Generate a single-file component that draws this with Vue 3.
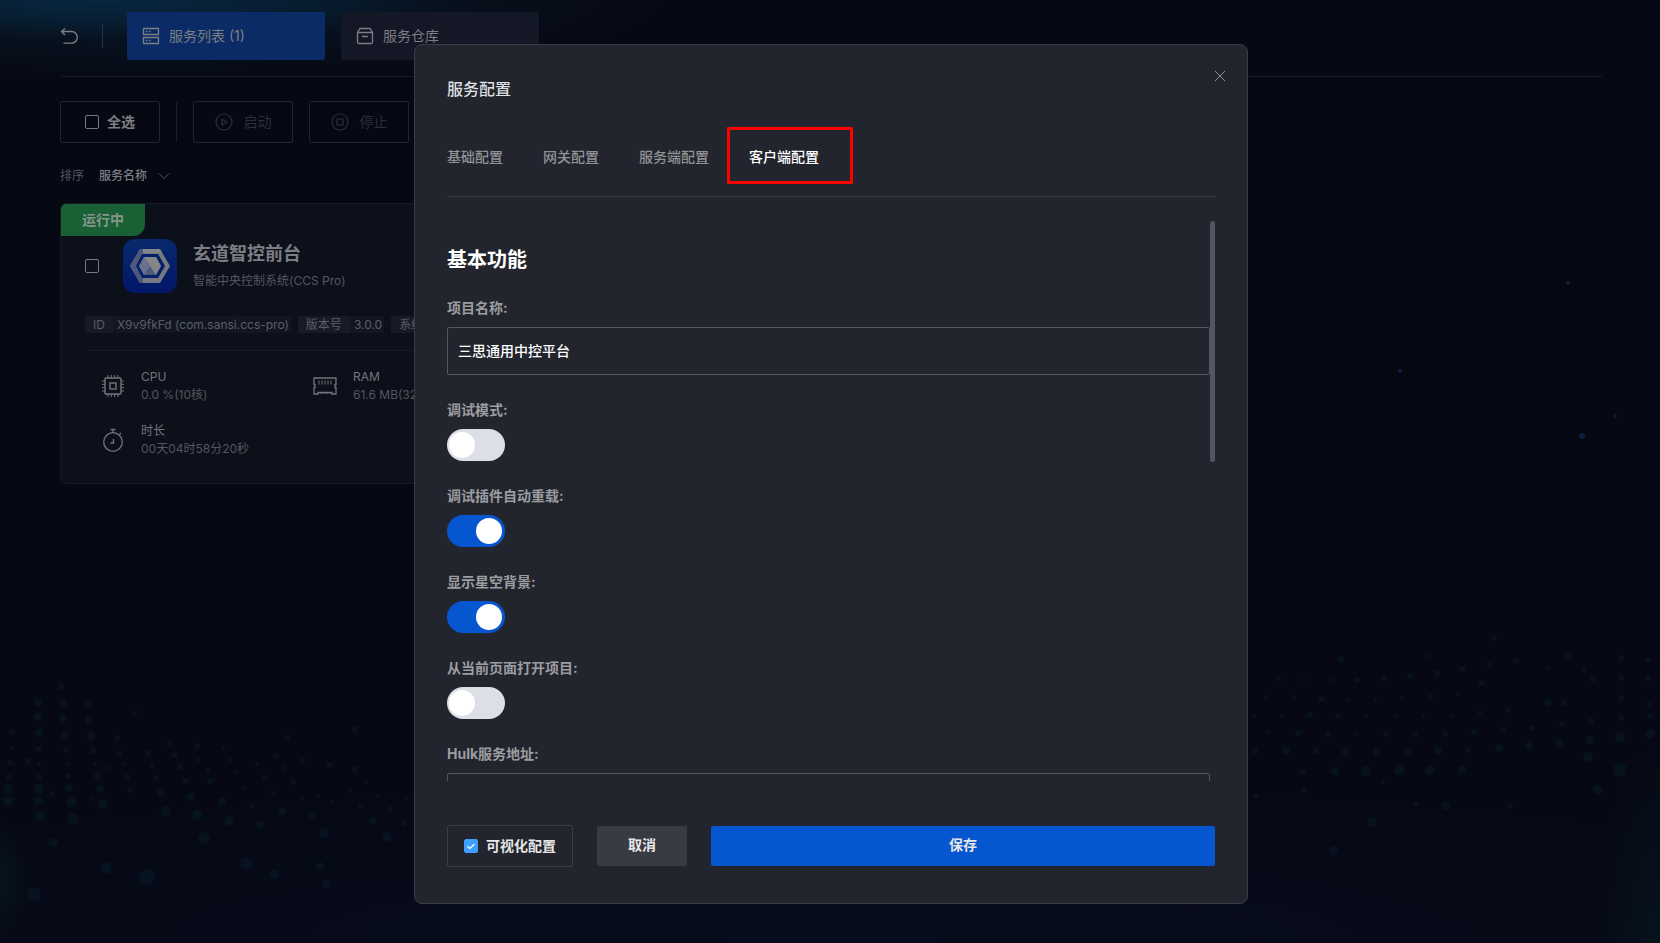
<script setup>
import { ref } from "vue";

const navTabs = ["服务列表 (1)", "服务仓库"];
const configTabs = ["基础配置", "网关配置", "服务端配置", "客户端配置"];
const activeTab = ref("客户端配置");

const projectName = ref("三思通用中控平台");
const hulkUrl = ref("");
const visual = ref(true);

const switches = ref([
  { id: "debug", label: "调试模式:", on: false },
  { id: "reload", label: "调试插件自动重载:", on: true },
  { id: "stars", label: "显示星空背景:", on: true },
  { id: "open", label: "从当前页面打开项目:", on: false },
]);

const tags = [
  { name: "ID", value: "X9v9fkFd (com.sansi.ccs-pro)" },
  { name: "版本号", value: "3.0.0" },
  { name: "系统", value: "darwin" },
];

const stats = [
  { icon: "cpu", name: "CPU", value: "0.0 %(10核)" },
  { icon: "ram", name: "RAM", value: "61.6 MB(32.0 GB)" },
  { icon: "time", name: "时长", value: "00天04时58分20秒" },
];

// 背景光点: [x, y, r]
const dots = [
  [12, 732, 3], [12, 748, 2], [10, 763, 3], [9, 777, 3], [8, 789, 5], [8, 801, 5],
  [38, 703, 4], [38, 717, 4], [39, 733, 4], [39, 749, 3], [39, 764, 2], [39, 777, 3], [39, 789, 5], [39, 801, 5], [40, 816, 6],
  [61, 687, 3], [63, 703, 4], [63, 718, 4], [65, 735, 4], [66, 750, 3], [67, 764, 2], [68, 776, 3], [69, 788, 4], [71, 802, 5], [73, 819, 6],
  [28, 761, 3], [52, 794, 3], [88, 704, 3], [89, 720, 4], [91, 736, 4], [93, 751, 3], [95, 764, 2], [98, 776, 4], [100, 789, 4], [103, 804, 5],
  [117, 738, 3], [119, 754, 3], [123, 764, 2], [127, 777, 3], [130, 790, 3], [135, 713, 2], [107, 768, 2], [93, 799, 2],
  [148, 753, 3], [152, 765, 3], [156, 778, 3], [161, 793, 4], [166, 811, 5], [170, 743, 3], [175, 755, 3], [180, 767, 3], [185, 781, 3], [191, 797, 4], [197, 815, 5],
  [197, 746, 3], [198, 760, 2], [208, 770, 2], [210, 781, 3], [222, 801, 4], [229, 821, 5], [204, 838, 6], [223, 749, 2], [230, 760, 2], [236, 773, 2], [244, 789, 2], [252, 806, 3], [260, 825, 4],
  [257, 764, 2], [265, 778, 3], [273, 793, 2], [282, 811, 4], [287, 738, 3], [276, 756, 3], [284, 768, 2], [293, 782, 3], [302, 798, 2], [312, 815, 4], [324, 833, 5],
  [302, 761, 3], [329, 765, 3], [355, 769, 3], [318, 795, 2], [332, 802, 2], [350, 791, 2], [361, 806, 3], [373, 821, 4], [387, 837, 5], [355, 729, 3], [366, 782, 2], [378, 795, 2], [390, 809, 3], [404, 823, 3], [406, 798, 2],
  [53, 842, 5], [106, 868, 6], [147, 877, 8], [34, 894, 7], [246, 863, 6], [274, 874, 4], [320, 866, 4], [326, 884, 4],
  [1255, 751, 3], [1279, 679, 2], [1304, 680, 2], [1331, 680, 2], [1357, 680, 3], [1384, 678, 3], [1410, 676, 3], [1437, 673, 3], [1463, 669, 3], [1490, 665, 3], [1516, 661, 3],
  [1266, 697, 2], [1294, 697, 2], [1321, 699, 3], [1348, 699, 2], [1375, 699, 2], [1402, 698, 2], [1430, 697, 3], [1458, 694, 2], [1481, 683, 3],
  [1254, 715, 2], [1282, 715, 2], [1310, 715, 3], [1338, 716, 3], [1366, 717, 2], [1395, 717, 2], [1423, 717, 2], [1451, 715, 2], [1480, 713, 2], [1508, 710, 3],
  [1269, 732, 2], [1298, 733, 3], [1328, 734, 3], [1357, 734, 2], [1386, 734, 3], [1415, 734, 3], [1445, 734, 3], [1474, 732, 3], [1503, 730, 3], [1532, 728, 3], [1562, 724, 3],
  [1286, 751, 4], [1316, 751, 3], [1346, 752, 4], [1377, 752, 4], [1408, 752, 3], [1438, 751, 4], [1468, 750, 3], [1499, 748, 4], [1529, 746, 4], [1559, 743, 4], [1590, 740, 4],
  [1303, 772, 3], [1335, 771, 4], [1366, 771, 5], [1399, 770, 5], [1430, 770, 5], [1462, 769, 4], [1304, 790, 3], [1383, 782, 2], [1256, 796, 3],
  [1341, 659, 3], [1429, 656, 2], [1494, 638, 3], [1568, 656, 4], [1549, 669, 2], [1584, 670, 2], [1548, 703, 4], [1564, 703, 3], [1621, 658, 3], [1621, 678, 3], [1621, 698, 3], [1621, 718, 3], [1620, 737, 5],
  [1648, 660, 3], [1648, 678, 3], [1650, 705, 3], [1650, 716, 3], [1650, 734, 5], [1620, 770, 7], [1588, 757, 5], [1593, 679, 3], [1591, 721, 3],
  [1446, 806, 4], [1510, 806, 3], [1416, 804, 3], [1598, 790, 5], [1334, 850, 4], [1372, 822, 5],
];

const stars = [[1582, 436, 3], [1615, 416, 2], [1400, 371, 2], [1568, 283, 2]];
</script>

<template>
  <div class="page">
    <svg class="dots" viewBox="0 0 1660 943" preserveAspectRatio="none" aria-hidden="true">
      <circle v-for="(d, i) in dots" :key="i" :cx="d[0]" :cy="d[1]" :r="d[2]" />
      <circle v-for="s in stars" :key="s[0]" class="star" :cx="s[0]" :cy="s[1]" :r="s[2]" />
    </svg>

    <header class="topbar">
      <button class="back" aria-label="返回">
        <svg width="20" height="18" viewBox="0 0 20 18" fill="none" stroke="currentColor" stroke-width="1.4">
          <path d="M5 1.5 1.5 4.5 5 8M1.5 4.5H11.5a5.8 5.8 0 0 1 0 11.6H3.5" />
        </svg>
      </button>
      <span class="sep"></span>
      <button v-for="(t, i) in navTabs" :key="t" class="nav-tab" :class="{ active: i === 0 }">
        <svg v-if="i === 0" width="18" height="18" viewBox="0 0 18 18" fill="none" stroke="currentColor" stroke-width="1.3">
          <path d="M1.5 1.5h15v6h-15zM1.5 10.5h15v6h-15z" />
          <path d="M4 4.5h1.5M7 4.5h1.5M4 13.5h1.5M7 13.5h1.5" />
        </svg>
        <svg v-else width="18" height="18" viewBox="0 0 18 18" fill="none" stroke="currentColor" stroke-width="1.3">
          <path d="M1.5 5.5 4 1.5h10l2.5 4v9.5a1.5 1.5 0 0 1-1.5 1.5H3A1.5 1.5 0 0 1 1.5 15zM1.5 5.5h15M6 9.5h6" />
        </svg>
        {{ t }}
      </button>
    </header>

    <div class="toolbar">
      <label class="tool all"><input type="checkbox" class="box" />全选</label>
      <span class="sep tall"></span>
      <button class="tool" disabled>
        <svg width="18" height="18" viewBox="0 0 18 18" fill="none" stroke="currentColor" stroke-width="1.2">
          <circle cx="9" cy="9" r="8" /><path d="M7 6.2v5.600L12 9z" />
        </svg>
        启动
      </button>
      <button class="tool" disabled>
        <svg width="18" height="18" viewBox="0 0 18 18" fill="none" stroke="currentColor" stroke-width="1.2">
          <circle cx="9" cy="9" r="8" /><path d="M6 6h6v6H6z" />
        </svg>
        停止
      </button>
    </div>

    <div class="sort">
      <label for="sort">排序</label>
      <select id="sort"><option>服务名称</option></select>
      <svg width="12" height="8" viewBox="0 0 12 8" fill="none" stroke="currentColor"><path d="M1 1.5 6 6.5 11 1.5" /></svg>
    </div>

    <article class="card">
      <span class="status">运行中</span>
      <div class="card-head">
        <input type="checkbox" class="box" aria-label="选择服务" />
        <svg class="logo" width="54" height="54" viewBox="0 0 54 54">
          <defs>
            <linearGradient id="lg" x1="0" y1="0" x2="0" y2="1">
              <stop offset="0" stop-color="#08296c" />
              <stop offset="1" stop-color="#03176a" />
            </linearGradient>
          </defs>
          <rect width="54" height="54" rx="12" fill="url(#lg)" />
          <path d="M17 10H37L47 27 37 44H17L7 27z" fill="#777982" />
          <path d="M17 10H20V16L14 27 20 38V44H17L7 27z" fill="#50597c" />
          <path d="M20 10H37L39 14H20z" fill="#85868a" />
          <path d="M19 15H35L42 27 35 39H19L13 27z" fill="#04206b" />
          <path d="M21 18H33L38 27 33 36H21L16 27z" fill="#50597c" />
          <path d="M21 18H33L38 27 33 36 27 27z" fill="#85868a" />
          <path d="M21 18 27 27 21 36 16 27z" fill="#69718c" />
        </svg>
        <div>
          <h2>玄道智控前台</h2>
          <p>智能中央控制系统(CCS Pro)</p>
        </div>
      </div>
      <div class="tags">
        <span v-for="t in tags" :key="t.name" class="tag"><b>{{ t.name }}</b><span>{{ t.value }}</span></span>
      </div>
      <div class="stats">
        <div v-for="s in stats" :key="s.name" class="stat">
          <svg v-if="s.icon === 'cpu'" width="24" height="24" viewBox="0 0 24 24" fill="none" stroke="currentColor" stroke-width="1.4">
            <rect x="4" y="4" width="16" height="16" rx="1" /><rect x="9" y="9" width="6" height="6" />
            <path d="M7 4V1M10.3 4V1M13.6 4V1M17 4V1M7 23v-3M10.3 23v-3M13.6 23v-3M17 23v-3M4 7H1M4 10.3H1M4 13.6H1M4 17H1M23 7h-3M23 10.3h-3M23 13.6h-3M23 17h-3" stroke-width="1" />
          </svg>
          <svg v-else-if="s.icon === 'ram'" width="24" height="24" viewBox="0 0 24 24" fill="none" stroke="currentColor" stroke-width="1.3">
            <path d="M1 4h22v6.5h-1v3h1V20h-4v-1.5H5V20H1v-6.5h1v-3H1z" />
            <path d="M6 6.5v4M9 6.5v4M12 6.5v4M15 6.5v4M18 6.5v4M8 18v2M11 18v2M14 18v2M17 18v2" stroke-width="1" />
          </svg>
          <svg v-else width="24" height="24" viewBox="0 0 24 24" fill="none" stroke="currentColor" stroke-width="1.3">
            <circle cx="12" cy="14" r="9.3" /><path d="M9.5 1.5h5M12 1.5v3M18.5 6.5 20 5M12.5 11v4h-3" />
          </svg>
          <div>
            <div class="stat-name">{{ s.name }}</div>
            <div class="stat-value">{{ s.value }}</div>
          </div>
        </div>
      </div>
    </article>

    <div class="overlay">
      <section class="dialog" role="dialog" aria-labelledby="dialog-title">
        <button class="close" aria-label="关闭">
          <svg width="12" height="12" viewBox="0 0 12 12" stroke="currentColor"><path d="M1 1 11 11M11 1 1 11" /></svg>
        </button>
        <h1 id="dialog-title">服务配置</h1>
        <nav class="tabs">
          <button
            v-for="t in configTabs"
            :key="t"
            class="tab"
            :class="{ active: activeTab === t }"
            @click="activeTab = t"
          >
            {{ t }}<span v-if="activeTab === t" class="mark"></span>
          </button>
        </nav>

        <div class="body">
          <form class="scroll" @submit.prevent>
            <h3>基本功能</h3>
            <div class="field">
              <label for="name">项目名称:</label>
              <input id="name" v-model="projectName" class="text" type="text" />
            </div>
            <div v-for="s in switches" :key="s.id" class="field">
              <label :for="s.id">{{ s.label }}</label>
              <input :id="s.id" v-model="s.on" class="switch" type="checkbox" role="switch" />
            </div>
            <div class="field">
              <label for="hulk">Hulk服务地址:</label>
              <input id="hulk" v-model="hulkUrl" class="text" type="text" />
            </div>
          </form>
          <span class="thumb"></span>
        </div>

        <footer class="actions">
          <label class="visual"><input v-model="visual" type="checkbox" class="box" />可视化配置</label>
          <button class="cancel">取消</button>
          <button class="save">保存</button>
        </footer>
      </section>
    </div>
  </div>
</template>

<style>
body {
  background: #060913;
}
</style>

<style scoped>
* {
  box-sizing: border-box;
}
h1, h2, h3, p {
  margin: 0;
}
button, input, select {
  font: inherit;
  color: inherit;
}
button {
  padding: 0;
  border: 0;
  background: none;
  cursor: pointer;
}
svg {
  flex: none;
}
.page {
  position: relative;
  min-height: 100vh;
  padding: 12px 58px 0 60px;
  overflow: hidden;
  font-family: Inter, "Noto Sans CJK SC", sans-serif;
  font-size: 14px;
  line-height: 20px;
  color: #7d7e83;
  background:
    radial-gradient(ellipse 360px 40px at 100px 0, #072640, transparent),
    radial-gradient(ellipse 520px 80px at 140px 0, #081a2b, transparent),
    radial-gradient(ellipse 30px 60px at 0 880px, #06151b, transparent),
    radial-gradient(ellipse 60px 200px at 100% 100%, #06131c, transparent),
    radial-gradient(ellipse 70% 160px at 50% 100%, #070c1e, transparent),
    #060913;
}
.dots {
  position: absolute;
  inset: 0;
  width: 100%;
  height: 100%;
  fill: #0d3040;
  fill-opacity: 0.26;
}
.dots .star {
  fill: #10386a;
  fill-opacity: 0.5;
}
.topbar {
  position: relative;
  display: flex;
  align-items: center;
  height: 65px;
  padding-bottom: 16px;
  border-bottom: 1px solid #151a26;
}
.back {
  width: 20px;
  height: 18px;
}
.sep {
  width: 1px;
  height: 24px;
  margin: 0 24px 0 22px;
  background: #2a3240;
}
.nav-tab {
  display: flex;
  align-items: center;
  gap: 9px;
  width: 198px;
  height: 48px;
  margin-right: 16px;
  padding-left: 15px;
  border-radius: 2px;
  background: #131726;
}
.nav-tab.active {
  background: #0b2b66;
}
.toolbar {
  position: relative;
  display: flex;
  align-items: center;
  gap: 16px;
  margin-top: 24px;
}
.tool {
  display: flex;
  align-items: center;
  justify-content: center;
  gap: 11px;
  width: 100px;
  height: 42px;
  border: 1px solid #22252f;
  border-radius: 2px;
  color: #2c2f39;
}
.tool.all {
  gap: 8px;
  font-weight: 700;
  color: #7d7e83;
}
.sep.tall {
  height: 40px;
  margin: 0;
  background: #1a1e2a;
}
.box {
  appearance: none;
  width: 14px;
  height: 14px;
  margin: 0;
  border: 1px solid #777980;
  border-radius: 2px;
}
.sort {
  position: relative;
  display: flex;
  align-items: center;
  gap: 10px;
  height: 16px;
  margin-top: 25px;
  font-size: 12px;
  line-height: 16px;
  color: #55575f;
}
.sort label {
  margin-right: 5px;
}
.sort select {
  appearance: none;
  padding: 0;
  border: 0;
  background: none;
  font-weight: 500;
  color: #7d7e83;
}
.card {
  position: relative;
  width: 500px;
  height: 281px;
  margin-top: 19px;
  padding: 0 24px;
  border: 1px solid #161a25;
  border-radius: 6px;
  background: #0c101b;
}
.status {
  display: block;
  width: 84px;
  height: 32px;
  margin-left: -24px;
  border-radius: 5px 0 12px 0;
  font-weight: 700;
  line-height: 32px;
  text-align: center;
  color: #85938a;
  background: #1a6035;
}
.card-head {
  display: flex;
  align-items: center;
  height: 54px;
  margin-top: 3px;
}
.logo {
  margin: 0 16px 0 24px;
}
h2 {
  font-size: 18px;
  font-weight: 700;
  line-height: 26px;
}
.card-head p {
  margin-top: 4px;
  font-size: 12px;
  line-height: 20px;
  color: #55575f;
}
.tags {
  display: flex;
  gap: 7px;
  height: 58px;
  padding-top: 23px;
  overflow: hidden;
  border-bottom: 1px solid #161a25;
  font-size: 12px;
  line-height: 17px;
  white-space: nowrap;
}
.tag {
  display: flex;
  height: 17px;
  color: #5c5e66;
  background: #121622;
}
.tag b {
  padding: 0 8px;
  font-weight: 400;
  background: #171b27;
}
.tag span {
  padding: 0 2px 0 4px;
}
.stats {
  display: grid;
  grid-template-columns: 212px 212px;
  row-gap: 18px;
  padding: 17px 16px;
}
.stat {
  display: flex;
  align-items: center;
  gap: 16px;
  font-size: 12px;
  line-height: 18px;
  color: #74757a;
  white-space: nowrap;
}
.stat-value {
  color: #54565e;
}
.overlay {
  position: fixed;
  inset: 0;
  display: flex;
  justify-content: center;
  padding: 44px 0 39px 2px;
}
.dialog {
  position: relative;
  display: flex;
  flex-direction: column;
  width: 834px;
  max-width: 94vw;
  padding: 32px;
  border: 1px solid #3a3d45;
  border-radius: 8px;
  background: #22252d;
}
.close {
  position: absolute;
  top: 25px;
  right: 21px;
  width: 12px;
  height: 12px;
  line-height: 0;
  color: #8d8f95;
}
h1 {
  font-size: 16px;
  font-weight: 500;
  line-height: 24px;
  color: #dedfe1;
}
.tabs {
  display: flex;
  gap: 40px;
  height: 96px;
  border-bottom: 1px solid #3b3e47;
}
.tab {
  position: relative;
  height: 20px;
  margin-top: 46px;
  font-weight: 500;
  color: #909296;
}
.tab.active {
  color: #fff;
}
.mark {
  position: absolute;
  inset: -20px -34px -17px -22px;
  border: 3px solid #fe0000;
  border-radius: 1px;
}
.body {
  position: relative;
  flex: 1;
  min-height: 0;
  margin: 24px 0 44px;
}
.scroll {
  height: 100%;
  padding: 23px 5px 0 0;
  overflow-y: auto;
  scrollbar-width: none;
}
.thumb {
  position: absolute;
  top: 0;
  right: 0;
  width: 5px;
  height: 43%;
  border-radius: 3px;
  background: #535662;
}
h3 {
  margin-bottom: 20px;
  font-size: 20px;
  font-weight: 700;
  line-height: 32px;
  color: #fff;
}
.field {
  display: flex;
  flex-direction: column;
  margin-bottom: 23px;
}
.field label {
  height: 31px;
  font-weight: 700;
  line-height: 24px;
  color: #9c9da0;
}
.text {
  width: 100%;
  height: 48px;
  padding: 0 10px 2px;
  border: 1px solid #53565b;
  border-radius: 2px;
  outline: 0;
  font-weight: 500;
  color: #fff;
  background: transparent;
}
.switch {
  appearance: none;
  display: flex;
  align-items: center;
  width: 58px;
  height: 32px;
  margin: 0;
  padding: 0 3px 0 2px;
  border-radius: 16px;
  background: #dcdfe6;
}
.switch::before {
  content: "";
  width: 26px;
  height: 26px;
  border-radius: 50%;
  background: #fff;
}
.switch:checked {
  justify-content: flex-end;
  background: #0656cf;
}
.actions {
  display: flex;
  align-items: center;
  gap: 24px;
  height: 42px;
  margin-bottom: 4px;
  font-weight: 700;
  color: #e6e6e8;
}
.visual {
  display: flex;
  align-items: center;
  justify-content: center;
  gap: 8px;
  width: 126px;
  height: 42px;
  border: 1px solid #3b3e46;
  border-radius: 2px;
}
.visual .box:checked {
  border-color: #409eff;
  background: #409eff url("data:image/svg+xml,%3Csvg xmlns='http://www.w3.org/2000/svg' viewBox='0 0 12 12'%3E%3Cpath d='M2.5 6.2 5 8.5 9.5 4' fill='none' stroke='white' stroke-width='1.2'/%3E%3C/svg%3E");
}
.cancel,
.save {
  height: 40px;
  padding-bottom: 2px;
  border-radius: 2px;
}
.cancel {
  width: 90px;
  background: #383b43;
}
.save {
  flex: 1;
  background: #0656cf;
}
</style>
